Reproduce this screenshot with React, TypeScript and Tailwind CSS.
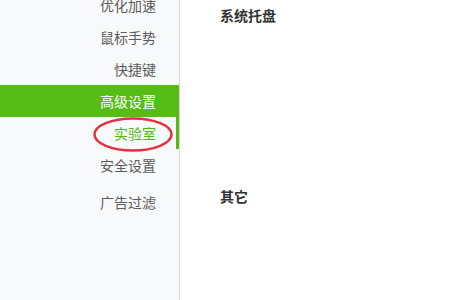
import React from "react";

const menu = [
  { label: "优化加速" },
  { label: "鼠标手势" },
  { label: "快捷键" },
  { label: "高级设置", active: true },
  { label: "实验室", current: true },
  { label: "安全设置" },
  { label: "广告过滤", gap: true },
];

export default function App() {
  return (
    <div
      className="flex h-[300px] w-[450px] overflow-hidden bg-white"
      style={{ fontFamily: '"Noto Sans CJK SC", "Noto Sans", sans-serif' }}
    >
      {/* Sidebar */}
      <div className="w-[180px] shrink-0 border-r border-[#d9d9d9] bg-[#f8f9fb]">
        <ul className="mt-[-11px] flex flex-col">
          {menu.map((item) => (
            <li
              key={item.label}
              className={`relative flex h-8 items-center justify-end pr-[23px] text-[14px] ${
                item.active
                  ? "bg-[#55bd16] text-white"
                  : item.current
                  ? "text-[#52b81a]"
                  : "text-[#5c5c5c]"
              } ${item.gap ? "mt-[5px]" : ""}`}
            >
              {item.label}
              {item.current && (
                <>
                  <span className="absolute right-0 top-0 h-8 w-[3px] bg-[#55bd16]" />
                  <svg
                    className="absolute left-[92px] top-0 overflow-visible"
                    width="82"
                    height="36"
                    viewBox="0 0 82 36"
                  >
                    <ellipse
                      cx="41"
                      cy="17.5"
                      rx="38.5"
                      ry="16"
                      fill="none"
                      stroke="#e2323f"
                      strokeWidth="2.5"
                    />
                  </svg>
                </>
              )}
            </li>
          ))}
        </ul>
      </div>

      {/* Content */}
      <div className="flex flex-1 flex-col pl-10">
        <div className="h-[186px] pt-[5px]">
          <h3 className="text-[14px] font-bold leading-5 text-[#333]">系统托盘</h3>
        </div>
        <h3 className="text-[14px] font-bold leading-5 text-[#333]">其它</h3>
      </div>
    </div>
  );
}
